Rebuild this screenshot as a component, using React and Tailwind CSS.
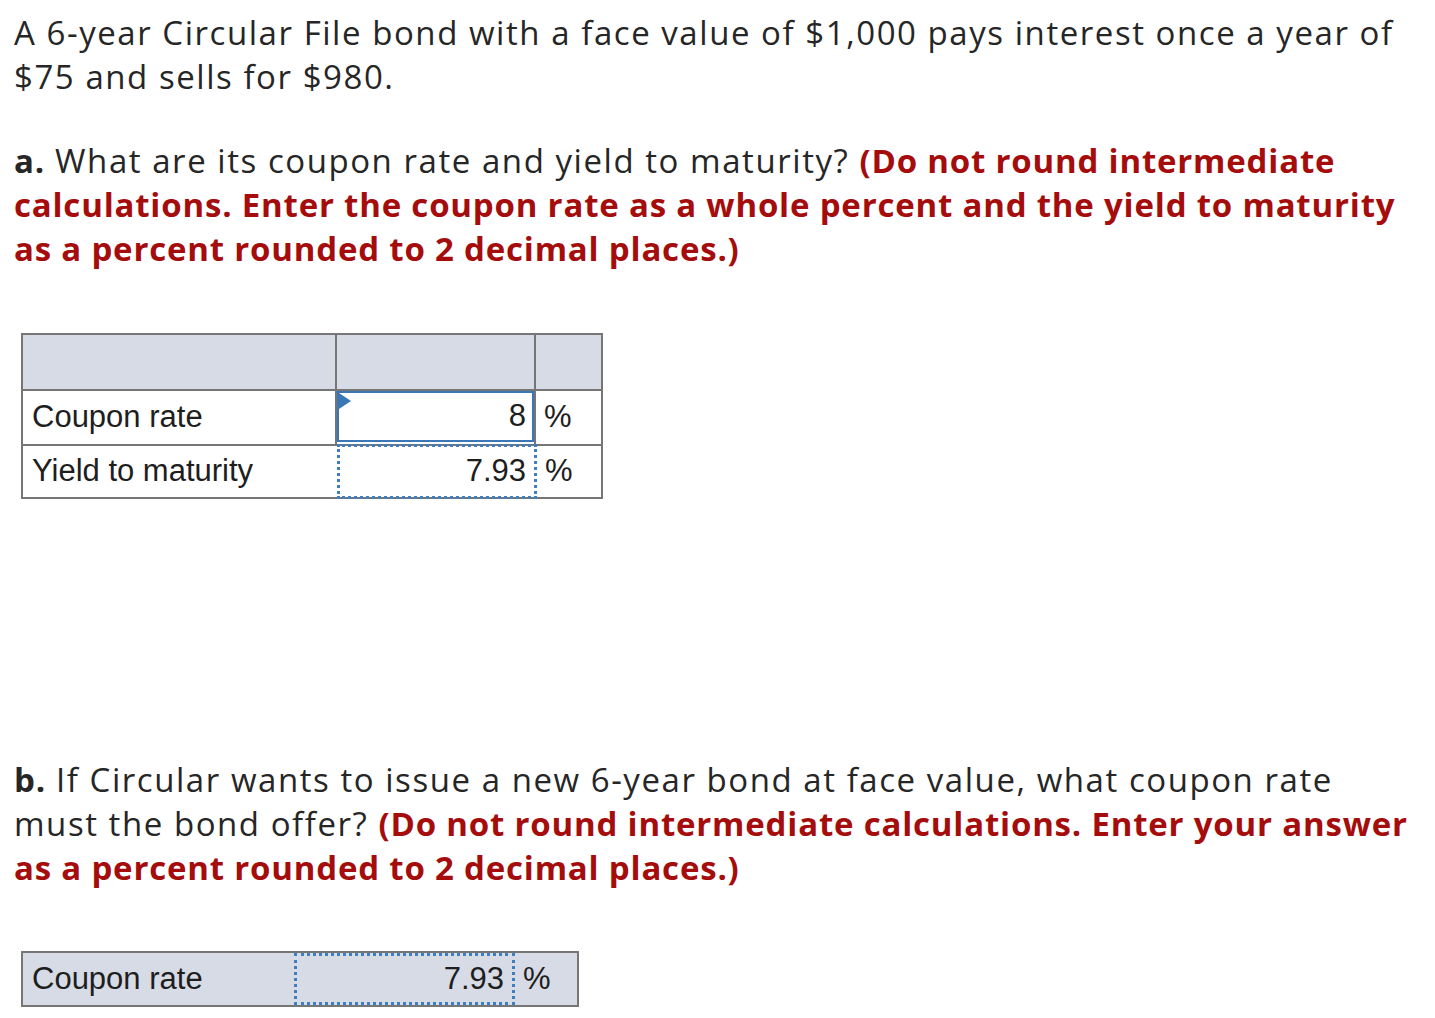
import React from "react";

const RED = "text-[#a50d0d] tracking-[0.8px]";

function InputSolid({ value }) {
  return (
    <div className="relative flex h-full w-full items-center justify-end border-2 border-[#3a77b6] pr-[6px]">
      <span className="absolute left-0 top-0 h-0 w-0 border-y-[8px] border-l-[12px] border-y-transparent border-l-[#3a77b6]" />
      {value}
    </div>
  );
}

function InputDotted({ value }) {
  return (
    <div className="flex h-full w-full items-center justify-end border-[3px] border-dotted border-[#3d7fc0] pr-[8px]">
      {value}
    </div>
  );
}

export default function App() {
  return (
    <div className="min-h-screen bg-white pl-[14px] pt-[11px] text-[#262626] font-['Open_Sans',sans-serif]">
      <div className="w-[1410px] text-[33px] leading-[44px] tracking-[1.55px]">
        <p>
          A 6-year Circular File bond with a face value of $1,000 pays interest once a year of $75 and sells for $980.
        </p>

        <p className="mt-[40px]">
          <b className="tracking-[0.8px]">a.</b> What are its coupon rate and yield to maturity?{" "}
          <b className={RED}>
            (Do not round intermediate calculations. Enter the coupon rate as a whole percent and the yield to maturity as a percent rounded to 2 decimal places.)
          </b>
        </p>
      </div>

      {/* part a table */}
      <div className="ml-[7px] mt-[62px] w-[582px] border-2 border-[#767676] font-['Liberation_Sans',Arial,sans-serif] text-[31px] text-[#1e1e1e]">
        <div className="flex h-[54px] bg-[#d6dbe5]">
          <div className="w-[314px] border-r-2 border-[#767676]" />
          <div className="w-[199px] border-r-2 border-[#767676]" />
          <div className="flex-1" />
        </div>
        <div className="flex h-[55px] border-t-2 border-[#767676]">
          <div className="flex w-[314px] items-center border-r-2 border-[#767676] pl-[9px]">Coupon rate</div>
          <div className="w-[197px] pb-[2px]">
            <InputSolid value="8" />
          </div>
          <div className="flex flex-1 items-center border-l-2 border-[#767676] pl-[8px]">%</div>
        </div>
        <div className="flex h-[53px] border-t-2 border-[#767676]">
          <div className="flex w-[314px] items-center pl-[9px]">Yield to maturity</div>
          <div className="-mb-[2px] -mt-[2px] w-[200px]">
            <InputDotted value="7.93" />
          </div>
          <div className="flex flex-1 items-center pl-[8px]">%</div>
        </div>
      </div>

      <div className="mt-[259px] w-[1410px] text-[33px] leading-[44px] tracking-[1.55px]">
        <p>
          <b className="tracking-[0.8px]">b.</b> If Circular wants to issue a new 6-year bond at face value, what coupon rate must the bond offer?{" "}
          <b className={RED}>
            (Do not round intermediate calculations. Enter your answer as a percent rounded to 2 decimal places.)
          </b>
        </p>
      </div>

      {/* part b table */}
      <div className="ml-[7px] mt-[61px] flex h-[56px] w-[558px] border-2 border-[#767676] bg-[#d6dbe5] font-['Liberation_Sans',Arial,sans-serif] text-[31px] text-[#1e1e1e]">
        <div className="flex w-[271px] items-center pl-[9px]">Coupon rate</div>
        <div className="w-[221px]">
          <InputDotted value="7.93" />
        </div>
        <div className="flex flex-1 items-center pl-[8px]">%</div>
      </div>
    </div>
  );
}
